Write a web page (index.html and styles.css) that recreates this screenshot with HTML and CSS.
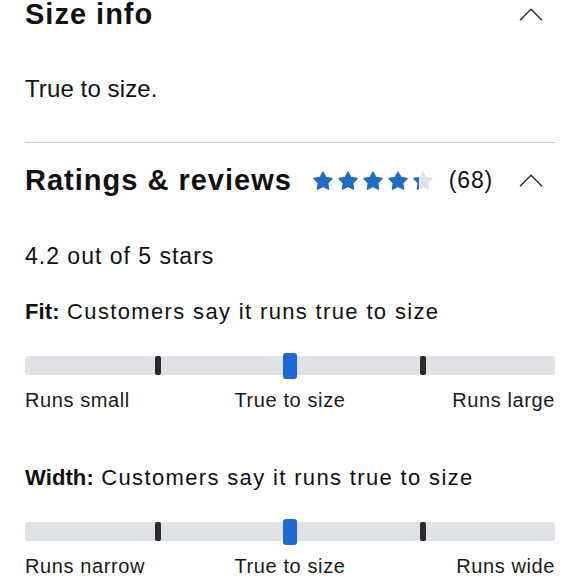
FILE: index.html
```html
<!DOCTYPE html>
<html lang="en">
<head>
<meta charset="utf-8">
<title>Size info and reviews</title>
<link rel="stylesheet" href="styles.css">
</head>
<body>
<main class="page">
  <section class="panel panel-size">
    <header class="panel-head">
      <h2 class="panel-title">Size info</h2>
      <svg class="chev" viewBox="0 0 24 13" width="24" height="13" aria-hidden="true"><path d="M1 12.2 L12 1.2 L23 12.2"/></svg>
    </header>
    <p class="size-text">True to size.</p>
  </section>

  <hr class="divider">

  <section class="panel panel-reviews">
    <header class="panel-head">
      <h2 class="panel-title">Ratings &amp; reviews</h2>
      <span class="stars" aria-label="4.2 stars">
        <svg class="star" viewBox="0 0 20 19" width="20" height="19"><path class="star-full" d="M10 1 L12.94 6.46 L19.1 7.5 L14.76 12.05 L15.6 18.2 L10 15.5 L4.4 18.2 L5.24 12.05 L0.9 7.5 L7.06 6.46 Z"/></svg>
        <svg class="star" viewBox="0 0 20 19" width="20" height="19"><path class="star-full" d="M10 1 L12.94 6.46 L19.1 7.5 L14.76 12.05 L15.6 18.2 L10 15.5 L4.4 18.2 L5.24 12.05 L0.9 7.5 L7.06 6.46 Z"/></svg>
        <svg class="star" viewBox="0 0 20 19" width="20" height="19"><path class="star-full" d="M10 1 L12.94 6.46 L19.1 7.5 L14.76 12.05 L15.6 18.2 L10 15.5 L4.4 18.2 L5.24 12.05 L0.9 7.5 L7.06 6.46 Z"/></svg>
        <svg class="star" viewBox="0 0 20 19" width="20" height="19"><path class="star-full" d="M10 1 L12.94 6.46 L19.1 7.5 L14.76 12.05 L15.6 18.2 L10 15.5 L4.4 18.2 L5.24 12.05 L0.9 7.5 L7.06 6.46 Z"/></svg>
        <svg class="star" viewBox="0 0 20 19" width="20" height="19">
          <defs>
            <linearGradient id="part">
              <stop offset="0.26" stop-color="#1f6bc8"/>
              <stop offset="0.26" stop-color="#dde3ea"/>
            </linearGradient>
          </defs>
          <path class="star-part" d="M10 1 L12.94 6.46 L19.1 7.5 L14.76 12.05 L15.6 18.2 L10 15.5 L4.4 18.2 L5.24 12.05 L0.9 7.5 L7.06 6.46 Z"/>
        </svg>
      </span>
      <span class="count">(68)</span>
      <svg class="chev" viewBox="0 0 24 13" width="24" height="13" aria-hidden="true"><path d="M1 12.2 L12 1.2 L23 12.2"/></svg>
    </header>

    <p class="avg">4.2 out of 5 stars</p>

    <div class="meter">
      <p class="meter-title"><b>Fit:</b> Customers say it runs true to size</p>
      <div class="track">
        <span class="tick tick-low"></span>
        <span class="thumb"></span>
        <span class="tick tick-high"></span>
      </div>
      <div class="labels">
        <span class="lab-start">Runs small</span>
        <span class="lab-mid">True to size</span>
        <span class="lab-end">Runs large</span>
      </div>
    </div>

    <div class="meter meter-width">
      <p class="meter-title"><b>Width:</b> Customers say it runs true to size</p>
      <div class="track">
        <span class="tick tick-low"></span>
        <span class="thumb"></span>
        <span class="tick tick-high"></span>
      </div>
      <div class="labels">
        <span class="lab-start">Runs narrow</span>
        <span class="lab-mid">True to size</span>
        <span class="lab-end">Runs wide</span>
      </div>
    </div>
  </section>
</main>
</body>
</html>
```

FILE: styles.css
```css
html, body {
  margin: 0;
  padding: 0;
  background: #ffffff;
}

body {
  font-family: "Liberation Sans", Arial, sans-serif;
  color: #111111;
  overflow: hidden;
}

.page {
  padding: 0 25px;
}

.panel-head {
  display: flex;
  align-items: center;
  height: 28px;
}

.panel-title {
  margin: 0;
  font-size: 29px;
  line-height: 28px;
  font-weight: 700;
  letter-spacing: 1px;
  color: #111111;
}

.chev {
  margin-left: auto;
  margin-right: 12px;
  flex: none;
}

.chev path {
  fill: none;
  stroke: #2a2a2a;
  stroke-width: 1.4;
}

.size-text {
  margin: 47px 0 0;
  font-size: 24px;
  line-height: 28px;
  letter-spacing: 0.1px;
}

.divider {
  margin: 39px 0 0;
  border: 0;
  border-top: 1px solid #cbcbcb;
  height: 0;
}

.panel-reviews {
  padding-top: 23px;
}

.stars {
  display: flex;
  gap: 5px;
  margin-left: 21px;
}

.star {
  display: block;
}

.star-full {
  fill: #1f6bc8;
  stroke: #1f6bc8;
  stroke-width: 1.3;
  stroke-linejoin: round;
}

.star-part {
  fill: url(#part);
  stroke: url(#part);
  stroke-width: 1.3;
  stroke-linejoin: round;
}

.count {
  margin-left: 16px;
  font-size: 23px;
  letter-spacing: 0.8px;
  line-height: 28px;
}

.avg {
  margin: 48px 0 0;
  font-size: 23px;
  line-height: 28px;
  letter-spacing: 1px;
}

.meter {
  margin-top: 28px;
}

.meter-width {
  margin-top: 52px;
}

.meter-title {
  margin: 0;
  font-size: 22px;
  line-height: 28px;
  letter-spacing: 1.35px;
}

.meter-title b {
  font-weight: 700;
  letter-spacing: 0.1px;
}

.track {
  position: relative;
  margin-top: 30px;
  height: 19px;
  background: #dfe2e6;
  border-radius: 3px;
}

.tick {
  position: absolute;
  top: 0;
  width: 6px;
  height: 19px;
  margin-left: -3px;
  background: #2b2b2b;
  border-radius: 2px;
}

.tick-low {
  left: 25%;
}

.tick-high {
  left: 75%;
}

.thumb {
  position: absolute;
  left: 50%;
  top: -3px;
  width: 14px;
  height: 26px;
  margin-left: -7px;
  background: #1c6ad6;
  border-radius: 3px;
}

.labels {
  display: grid;
  grid-template-columns: 1fr auto 1fr;
  margin-top: 13px;
  font-size: 20px;
  line-height: 24px;
  letter-spacing: 0.6px;
  color: #1a1a1a;
}

.lab-start {
  justify-self: start;
}

.lab-mid {
  justify-self: center;
}

.lab-end {
  justify-self: end;
}
```
